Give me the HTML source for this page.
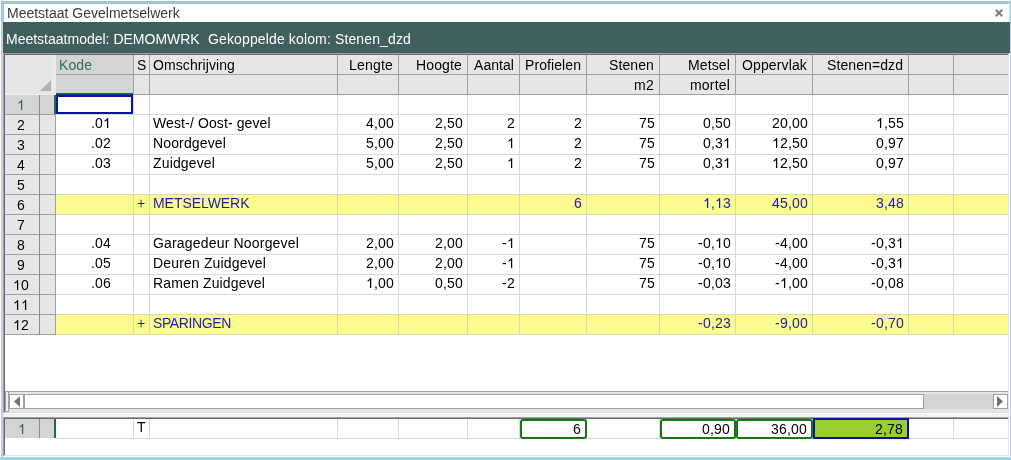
<!DOCTYPE html>
<html><head><meta charset="utf-8"><style>
html,body{margin:0;padding:0;}
body{width:1011px;height:460px;position:relative;overflow:hidden;background:#fff;font-family:"Liberation Sans",sans-serif;font-size:14px;}
div,svg{position:absolute;}
.t{position:absolute;will-change:transform;line-height:16px;height:16px;white-space:pre;font-family:"Liberation Sans",sans-serif;font-size:14px;}
.r{width:300px;text-align:right;}
.one{position:absolute;}
.c{width:100px;text-align:center;}
</style></head><body>
<div style="left:0px;top:0px;width:1011px;height:460px;background:#ffffff;"></div>
<div style="left:1px;top:0px;width:1px;height:460px;background:#c3cedd;"></div>
<div style="left:2px;top:0px;width:1px;height:460px;background:#c6d0de;"></div>
<div style="left:1010px;top:0px;width:1px;height:460px;background:#c0cde0;"></div>
<div style="left:1px;top:1px;width:1010px;height:1px;background:#a6bcc8;"></div>
<div style="left:1px;top:2px;width:1010px;height:1px;background:#9fd1da;"></div>
<div style="left:1px;top:3px;width:1010px;height:1px;background:#94c9cb;"></div>
<div style="left:1px;top:1px;width:1px;height:21px;background:#aec0d6;"></div>
<div style="left:2px;top:1px;width:1px;height:21px;background:#a0d0dc;"></div>
<div style="left:3px;top:1px;width:1px;height:21px;background:#92c8ca;"></div>
<div style="left:1009px;top:1px;width:1px;height:21px;background:#c4e6e8;"></div>
<div style="left:1010px;top:1px;width:1px;height:21px;background:#b4cce0;"></div>
<div style="left:0px;top:457px;width:1011px;height:1px;background:#a8d8ec;"></div>
<div style="left:0px;top:458px;width:1011px;height:1px;background:#9ad4ea;"></div>
<div style="left:0px;top:459px;width:1011px;height:1px;background:#9ad4ea;"></div>
<div style="left:4px;top:4px;width:1005px;height:18px;background:#ffffff;"></div>
<span class="t" style="left:7px;top:5px;color:#3a3a3a;letter-spacing:0.000px;">Meetstaat Gevelmetselwerk</span>
<svg style="position:absolute;left:995px;top:9px" width="8" height="8" viewBox="0 0 8 8"><path d="M1.5 1.5L6.5 6.5M6.5 1.5L1.5 6.5" stroke="#7c7c7c" stroke-width="2" stroke-linecap="square" fill="none"/></svg>
<div style="left:3px;top:22px;width:1007px;height:31px;background:#405f5d;"></div>
<span class="t" style="left:6px;top:31px;color:#ffffff;letter-spacing:0.000px;">Meetstaatmodel: DEMOMWRK</span>
<span class="t" style="left:208px;top:31px;color:#ffffff;letter-spacing:0.134px;">Gekoppelde kolom: Stenen_dzd</span>
<div style="left:3px;top:53px;width:1007px;height:361px;background:#ffffff;"></div>
<div style="left:3px;top:53px;width:1006px;height:1px;background:#a0a0a0;"></div>
<div style="left:3px;top:53px;width:1px;height:360px;background:#a0a0a0;"></div>
<div style="left:4px;top:54px;width:1005px;height:1px;background:#696969;"></div>
<div style="left:4px;top:54px;width:1px;height:359px;background:#696969;"></div>
<div style="left:4px;top:412px;width:1005px;height:1px;background:#e3e3e3;"></div>
<div style="left:1008px;top:54px;width:1px;height:359px;background:#e3e3e3;"></div>
<div style="left:4px;top:412px;width:1004px;height:1px;background:#e3e3e3;"></div>
<div style="left:3px;top:414px;width:1007px;height:3px;background:#f4f4f4;"></div>
<div style="left:5px;top:55px;width:1003px;height:39px;background:#e6e6e6;"></div>
<div style="left:52px;top:55px;width:4px;height:39px;background:#ececec;"></div>
<div style="left:56px;top:55px;width:77px;height:39px;background:#d4d4d4;"></div>
<div style="left:56px;top:74px;width:952px;height:1px;background:#a0a0a0;"></div>
<div style="left:5px;top:94px;width:51px;height:1px;background:#f0f0f0;"></div>
<div style="left:56px;top:94px;width:952px;height:1px;background:#a0a0a0;"></div>
<div style="left:56px;top:92px;width:77px;height:1px;background:#bfe0c8;"></div>
<div style="left:56px;top:93px;width:77px;height:1px;background:#1f6b3f;"></div>
<div style="left:56px;top:94px;width:77px;height:1px;background:#143a96;"></div>
<div style="left:133px;top:55px;width:1px;height:39px;background:#a0a0a0;"></div>
<div style="left:149px;top:55px;width:1px;height:39px;background:#a0a0a0;"></div>
<div style="left:337px;top:55px;width:1px;height:39px;background:#a0a0a0;"></div>
<div style="left:398px;top:55px;width:1px;height:39px;background:#a0a0a0;"></div>
<div style="left:467px;top:55px;width:1px;height:39px;background:#a0a0a0;"></div>
<div style="left:519px;top:55px;width:1px;height:39px;background:#a0a0a0;"></div>
<div style="left:586px;top:55px;width:1px;height:39px;background:#a0a0a0;"></div>
<div style="left:659px;top:55px;width:1px;height:39px;background:#a0a0a0;"></div>
<div style="left:735px;top:55px;width:1px;height:39px;background:#a0a0a0;"></div>
<div style="left:812px;top:55px;width:1px;height:39px;background:#a0a0a0;"></div>
<div style="left:908px;top:55px;width:1px;height:39px;background:#a0a0a0;"></div>
<div style="left:953px;top:55px;width:1px;height:39px;background:#a0a0a0;"></div>
<svg style="position:absolute;left:40px;top:80px" width="12" height="12"><path d="M0 11L11 11L11 0Z" fill="#b4b4b4"/></svg>
<span class="t" style="left:59px;top:57px;color:#2d6e4e;letter-spacing:0.076px;">Kode</span>
<span class="t" style="left:137px;top:57px;color:#000;letter-spacing:-0.338px;">S</span>
<span class="t" style="left:153px;top:57px;color:#000;letter-spacing:0.091px;">Omschrijving</span>
<span class="t" style="left:349.0px;top:57px;color:#000;letter-spacing:0.197px;">Lengte</span>
<span class="t" style="left:416.0px;top:57px;color:#000;letter-spacing:0.143px;">Hoogte</span>
<span class="t" style="left:474.0px;top:57px;color:#000;letter-spacing:0.051px;">Aantal</span>
<span class="t" style="left:525.0px;top:57px;color:#000;letter-spacing:0.083px;">Profielen</span>
<span class="t" style="left:609.0px;top:57px;color:#000;letter-spacing:0.105px;">Stenen</span>
<span class="t" style="left:688.0px;top:57px;color:#000;letter-spacing:0.128px;">Metsel</span>
<span class="t" style="left:742.0px;top:57px;color:#000;letter-spacing:0.133px;">Oppervlak</span>
<span class="t" style="left:827.0px;top:57px;color:#000;letter-spacing:0.088px;">Stenen=dzd</span>
<span class="t" style="left:634.0px;top:77px;color:#000;letter-spacing:0.276px;">m2</span>
<span class="t" style="left:690.0px;top:77px;color:#000;letter-spacing:0.184px;">mortel</span>
<div style="left:5px;top:95px;width:50px;height:19px;background:#d4d4d4;"></div>
<div style="left:5px;top:114px;width:51px;height:1px;background:#a0a0a0;"></div>
<div style="left:56px;top:114px;width:952px;height:1px;background:#d8d8d8;"></div>
<div style="left:133px;top:95px;width:1px;height:19px;background:#d8d8d8;"></div>
<div style="left:149px;top:95px;width:1px;height:19px;background:#d8d8d8;"></div>
<div style="left:337px;top:95px;width:1px;height:19px;background:#d8d8d8;"></div>
<div style="left:398px;top:95px;width:1px;height:19px;background:#d8d8d8;"></div>
<div style="left:467px;top:95px;width:1px;height:19px;background:#d8d8d8;"></div>
<div style="left:519px;top:95px;width:1px;height:19px;background:#d8d8d8;"></div>
<div style="left:586px;top:95px;width:1px;height:19px;background:#d8d8d8;"></div>
<div style="left:659px;top:95px;width:1px;height:19px;background:#d8d8d8;"></div>
<div style="left:735px;top:95px;width:1px;height:19px;background:#d8d8d8;"></div>
<div style="left:812px;top:95px;width:1px;height:19px;background:#d8d8d8;"></div>
<div style="left:908px;top:95px;width:1px;height:19px;background:#d8d8d8;"></div>
<div style="left:953px;top:95px;width:1px;height:19px;background:#d8d8d8;"></div>
<svg class="one" style="left:17.00px;top:97px" width="8" height="16"><path d="M5.22 13.00 L3.99 13.00 L3.99 5.16 L3.69 5.43 L3.21 5.77 L2.67 6.10 L2.05 6.42 L1.52 6.64 L1.52 5.44 L2.26 5.07 L2.94 4.59 L3.55 4.04 L4.03 3.50 L4.38 2.98 L5.22 2.98Z" fill="#2f6f47"/></svg>
<span class="t" style="left:17.0px;top:97px;color:#2f6f47;letter-spacing:0.214px;"> </span>
<div style="left:5px;top:115px;width:50px;height:19px;background:#e6e6e6;"></div>
<div style="left:5px;top:134px;width:51px;height:1px;background:#a0a0a0;"></div>
<div style="left:56px;top:134px;width:952px;height:1px;background:#d8d8d8;"></div>
<div style="left:133px;top:115px;width:1px;height:19px;background:#d8d8d8;"></div>
<div style="left:149px;top:115px;width:1px;height:19px;background:#d8d8d8;"></div>
<div style="left:337px;top:115px;width:1px;height:19px;background:#d8d8d8;"></div>
<div style="left:398px;top:115px;width:1px;height:19px;background:#d8d8d8;"></div>
<div style="left:467px;top:115px;width:1px;height:19px;background:#d8d8d8;"></div>
<div style="left:519px;top:115px;width:1px;height:19px;background:#d8d8d8;"></div>
<div style="left:586px;top:115px;width:1px;height:19px;background:#d8d8d8;"></div>
<div style="left:659px;top:115px;width:1px;height:19px;background:#d8d8d8;"></div>
<div style="left:735px;top:115px;width:1px;height:19px;background:#d8d8d8;"></div>
<div style="left:812px;top:115px;width:1px;height:19px;background:#d8d8d8;"></div>
<div style="left:908px;top:115px;width:1px;height:19px;background:#d8d8d8;"></div>
<div style="left:953px;top:115px;width:1px;height:19px;background:#d8d8d8;"></div>
<span class="t" style="left:17.0px;top:117px;color:#000;letter-spacing:0.214px;">2</span>
<svg class="one" style="left:103.03px;top:115px" width="8" height="16"><path d="M5.22 13.00 L3.99 13.00 L3.99 5.16 L3.69 5.43 L3.21 5.77 L2.67 6.10 L2.05 6.42 L1.52 6.64 L1.52 5.44 L2.26 5.07 L2.94 4.59 L3.55 4.04 L4.03 3.50 L4.38 2.98 L5.22 2.98Z" fill="#000"/></svg>
<span class="t" style="left:91px;top:115px;color:#000;letter-spacing:0.179px;">.0 </span>
<span class="t" style="left:153px;top:115px;color:#000;letter-spacing:0.116px;">West-/ Oost- gevel</span>
<span class="t" style="left:366.0px;top:115px;color:#000;letter-spacing:0.188px;">4,00</span>
<span class="t" style="left:435.0px;top:115px;color:#000;letter-spacing:0.188px;">2,50</span>
<span class="t" style="left:507.0px;top:115px;color:#000;letter-spacing:0.214px;">2</span>
<span class="t" style="left:574.0px;top:115px;color:#000;letter-spacing:0.214px;">2</span>
<span class="t" style="left:639.0px;top:115px;color:#000;letter-spacing:0.214px;">75</span>
<span class="t" style="left:703.0px;top:115px;color:#000;letter-spacing:0.188px;">0,50</span>
<span class="t" style="left:772.0px;top:115px;color:#000;letter-spacing:0.193px;">20,00</span>
<svg class="one" style="left:876.00px;top:115px" width="8" height="16"><path d="M5.22 13.00 L3.99 13.00 L3.99 5.16 L3.69 5.43 L3.21 5.77 L2.67 6.10 L2.05 6.42 L1.52 6.64 L1.52 5.44 L2.26 5.07 L2.94 4.59 L3.55 4.04 L4.03 3.50 L4.38 2.98 L5.22 2.98Z" fill="#000"/></svg>
<span class="t" style="left:876.0px;top:115px;color:#000;letter-spacing:0.188px;"> ,55</span>
<div style="left:5px;top:135px;width:50px;height:19px;background:#e6e6e6;"></div>
<div style="left:5px;top:154px;width:51px;height:1px;background:#a0a0a0;"></div>
<div style="left:56px;top:154px;width:952px;height:1px;background:#d8d8d8;"></div>
<div style="left:133px;top:135px;width:1px;height:19px;background:#d8d8d8;"></div>
<div style="left:149px;top:135px;width:1px;height:19px;background:#d8d8d8;"></div>
<div style="left:337px;top:135px;width:1px;height:19px;background:#d8d8d8;"></div>
<div style="left:398px;top:135px;width:1px;height:19px;background:#d8d8d8;"></div>
<div style="left:467px;top:135px;width:1px;height:19px;background:#d8d8d8;"></div>
<div style="left:519px;top:135px;width:1px;height:19px;background:#d8d8d8;"></div>
<div style="left:586px;top:135px;width:1px;height:19px;background:#d8d8d8;"></div>
<div style="left:659px;top:135px;width:1px;height:19px;background:#d8d8d8;"></div>
<div style="left:735px;top:135px;width:1px;height:19px;background:#d8d8d8;"></div>
<div style="left:812px;top:135px;width:1px;height:19px;background:#d8d8d8;"></div>
<div style="left:908px;top:135px;width:1px;height:19px;background:#d8d8d8;"></div>
<div style="left:953px;top:135px;width:1px;height:19px;background:#d8d8d8;"></div>
<span class="t" style="left:17.0px;top:137px;color:#000;letter-spacing:0.214px;">3</span>
<span class="t" style="left:91px;top:135px;color:#000;letter-spacing:0.179px;">.02</span>
<span class="t" style="left:153px;top:135px;color:#000;letter-spacing:0.140px;">Noordgevel</span>
<span class="t" style="left:366.0px;top:135px;color:#000;letter-spacing:0.188px;">5,00</span>
<span class="t" style="left:435.0px;top:135px;color:#000;letter-spacing:0.188px;">2,50</span>
<svg class="one" style="left:507.00px;top:135px" width="8" height="16"><path d="M5.22 13.00 L3.99 13.00 L3.99 5.16 L3.69 5.43 L3.21 5.77 L2.67 6.10 L2.05 6.42 L1.52 6.64 L1.52 5.44 L2.26 5.07 L2.94 4.59 L3.55 4.04 L4.03 3.50 L4.38 2.98 L5.22 2.98Z" fill="#000"/></svg>
<span class="t" style="left:507.0px;top:135px;color:#000;letter-spacing:0.214px;"> </span>
<span class="t" style="left:574.0px;top:135px;color:#000;letter-spacing:0.214px;">2</span>
<span class="t" style="left:639.0px;top:135px;color:#000;letter-spacing:0.214px;">75</span>
<svg class="one" style="left:723.03px;top:135px" width="8" height="16"><path d="M5.22 13.00 L3.99 13.00 L3.99 5.16 L3.69 5.43 L3.21 5.77 L2.67 6.10 L2.05 6.42 L1.52 6.64 L1.52 5.44 L2.26 5.07 L2.94 4.59 L3.55 4.04 L4.03 3.50 L4.38 2.98 L5.22 2.98Z" fill="#000"/></svg>
<span class="t" style="left:703.0px;top:135px;color:#000;letter-spacing:0.188px;">0,3 </span>
<svg class="one" style="left:772.00px;top:135px" width="8" height="16"><path d="M5.22 13.00 L3.99 13.00 L3.99 5.16 L3.69 5.43 L3.21 5.77 L2.67 6.10 L2.05 6.42 L1.52 6.64 L1.52 5.44 L2.26 5.07 L2.94 4.59 L3.55 4.04 L4.03 3.50 L4.38 2.98 L5.22 2.98Z" fill="#000"/></svg>
<span class="t" style="left:772.0px;top:135px;color:#000;letter-spacing:0.193px;"> 2,50</span>
<span class="t" style="left:876.0px;top:135px;color:#000;letter-spacing:0.188px;">0,97</span>
<div style="left:5px;top:155px;width:50px;height:19px;background:#e6e6e6;"></div>
<div style="left:5px;top:174px;width:51px;height:1px;background:#a0a0a0;"></div>
<div style="left:56px;top:174px;width:952px;height:1px;background:#d8d8d8;"></div>
<div style="left:133px;top:155px;width:1px;height:19px;background:#d8d8d8;"></div>
<div style="left:149px;top:155px;width:1px;height:19px;background:#d8d8d8;"></div>
<div style="left:337px;top:155px;width:1px;height:19px;background:#d8d8d8;"></div>
<div style="left:398px;top:155px;width:1px;height:19px;background:#d8d8d8;"></div>
<div style="left:467px;top:155px;width:1px;height:19px;background:#d8d8d8;"></div>
<div style="left:519px;top:155px;width:1px;height:19px;background:#d8d8d8;"></div>
<div style="left:586px;top:155px;width:1px;height:19px;background:#d8d8d8;"></div>
<div style="left:659px;top:155px;width:1px;height:19px;background:#d8d8d8;"></div>
<div style="left:735px;top:155px;width:1px;height:19px;background:#d8d8d8;"></div>
<div style="left:812px;top:155px;width:1px;height:19px;background:#d8d8d8;"></div>
<div style="left:908px;top:155px;width:1px;height:19px;background:#d8d8d8;"></div>
<div style="left:953px;top:155px;width:1px;height:19px;background:#d8d8d8;"></div>
<span class="t" style="left:17.0px;top:157px;color:#000;letter-spacing:0.214px;">4</span>
<span class="t" style="left:91px;top:155px;color:#000;letter-spacing:0.179px;">.03</span>
<span class="t" style="left:153px;top:155px;color:#000;letter-spacing:0.144px;">Zuidgevel</span>
<span class="t" style="left:366.0px;top:155px;color:#000;letter-spacing:0.188px;">5,00</span>
<span class="t" style="left:435.0px;top:155px;color:#000;letter-spacing:0.188px;">2,50</span>
<svg class="one" style="left:507.00px;top:155px" width="8" height="16"><path d="M5.22 13.00 L3.99 13.00 L3.99 5.16 L3.69 5.43 L3.21 5.77 L2.67 6.10 L2.05 6.42 L1.52 6.64 L1.52 5.44 L2.26 5.07 L2.94 4.59 L3.55 4.04 L4.03 3.50 L4.38 2.98 L5.22 2.98Z" fill="#000"/></svg>
<span class="t" style="left:507.0px;top:155px;color:#000;letter-spacing:0.214px;"> </span>
<span class="t" style="left:574.0px;top:155px;color:#000;letter-spacing:0.214px;">2</span>
<span class="t" style="left:639.0px;top:155px;color:#000;letter-spacing:0.214px;">75</span>
<svg class="one" style="left:723.03px;top:155px" width="8" height="16"><path d="M5.22 13.00 L3.99 13.00 L3.99 5.16 L3.69 5.43 L3.21 5.77 L2.67 6.10 L2.05 6.42 L1.52 6.64 L1.52 5.44 L2.26 5.07 L2.94 4.59 L3.55 4.04 L4.03 3.50 L4.38 2.98 L5.22 2.98Z" fill="#000"/></svg>
<span class="t" style="left:703.0px;top:155px;color:#000;letter-spacing:0.188px;">0,3 </span>
<svg class="one" style="left:772.00px;top:155px" width="8" height="16"><path d="M5.22 13.00 L3.99 13.00 L3.99 5.16 L3.69 5.43 L3.21 5.77 L2.67 6.10 L2.05 6.42 L1.52 6.64 L1.52 5.44 L2.26 5.07 L2.94 4.59 L3.55 4.04 L4.03 3.50 L4.38 2.98 L5.22 2.98Z" fill="#000"/></svg>
<span class="t" style="left:772.0px;top:155px;color:#000;letter-spacing:0.193px;"> 2,50</span>
<span class="t" style="left:876.0px;top:155px;color:#000;letter-spacing:0.188px;">0,97</span>
<div style="left:5px;top:175px;width:50px;height:19px;background:#e6e6e6;"></div>
<div style="left:5px;top:194px;width:51px;height:1px;background:#a0a0a0;"></div>
<div style="left:56px;top:194px;width:952px;height:1px;background:#d8d8d8;"></div>
<div style="left:133px;top:175px;width:1px;height:19px;background:#d8d8d8;"></div>
<div style="left:149px;top:175px;width:1px;height:19px;background:#d8d8d8;"></div>
<div style="left:337px;top:175px;width:1px;height:19px;background:#d8d8d8;"></div>
<div style="left:398px;top:175px;width:1px;height:19px;background:#d8d8d8;"></div>
<div style="left:467px;top:175px;width:1px;height:19px;background:#d8d8d8;"></div>
<div style="left:519px;top:175px;width:1px;height:19px;background:#d8d8d8;"></div>
<div style="left:586px;top:175px;width:1px;height:19px;background:#d8d8d8;"></div>
<div style="left:659px;top:175px;width:1px;height:19px;background:#d8d8d8;"></div>
<div style="left:735px;top:175px;width:1px;height:19px;background:#d8d8d8;"></div>
<div style="left:812px;top:175px;width:1px;height:19px;background:#d8d8d8;"></div>
<div style="left:908px;top:175px;width:1px;height:19px;background:#d8d8d8;"></div>
<div style="left:953px;top:175px;width:1px;height:19px;background:#d8d8d8;"></div>
<span class="t" style="left:17.0px;top:177px;color:#000;letter-spacing:0.214px;">5</span>
<div style="left:5px;top:195px;width:50px;height:19px;background:#e6e6e6;"></div>
<div style="left:5px;top:214px;width:51px;height:1px;background:#a0a0a0;"></div>
<div style="left:56px;top:195px;width:952px;height:19px;background:#fcfb90;"></div>
<div style="left:56px;top:194px;width:952px;height:1px;background:#dcd9b0;"></div>
<div style="left:56px;top:214px;width:952px;height:1px;background:#dcd9b0;"></div>
<div style="left:133px;top:195px;width:1px;height:19px;background:#dcd9b0;"></div>
<div style="left:149px;top:195px;width:1px;height:19px;background:#dcd9b0;"></div>
<div style="left:337px;top:195px;width:1px;height:19px;background:#dcd9b0;"></div>
<div style="left:398px;top:195px;width:1px;height:19px;background:#dcd9b0;"></div>
<div style="left:467px;top:195px;width:1px;height:19px;background:#dcd9b0;"></div>
<div style="left:519px;top:195px;width:1px;height:19px;background:#dcd9b0;"></div>
<div style="left:586px;top:195px;width:1px;height:19px;background:#dcd9b0;"></div>
<div style="left:659px;top:195px;width:1px;height:19px;background:#dcd9b0;"></div>
<div style="left:735px;top:195px;width:1px;height:19px;background:#dcd9b0;"></div>
<div style="left:812px;top:195px;width:1px;height:19px;background:#dcd9b0;"></div>
<div style="left:908px;top:195px;width:1px;height:19px;background:#dcd9b0;"></div>
<div style="left:953px;top:195px;width:1px;height:19px;background:#dcd9b0;"></div>
<span class="t" style="left:17.0px;top:197px;color:#000;letter-spacing:0.214px;">6</span>
<span class="t" style="left:137px;top:195px;color:#1c1cac;letter-spacing:-0.176px;">+</span>
<span class="t" style="left:153px;top:195px;color:#1c1cac;letter-spacing:-0.051px;">METSELWERK</span>
<span class="t" style="left:574.0px;top:195px;color:#1c1cac;letter-spacing:0.214px;">6</span>
<svg class="one" style="left:703.00px;top:195px" width="8" height="16"><path d="M5.22 13.00 L3.99 13.00 L3.99 5.16 L3.69 5.43 L3.21 5.77 L2.67 6.10 L2.05 6.42 L1.52 6.64 L1.52 5.44 L2.26 5.07 L2.94 4.59 L3.55 4.04 L4.03 3.50 L4.38 2.98 L5.22 2.98Z" fill="#1c1cac"/></svg>
<svg class="one" style="left:715.05px;top:195px" width="8" height="16"><path d="M5.22 13.00 L3.99 13.00 L3.99 5.16 L3.69 5.43 L3.21 5.77 L2.67 6.10 L2.05 6.42 L1.52 6.64 L1.52 5.44 L2.26 5.07 L2.94 4.59 L3.55 4.04 L4.03 3.50 L4.38 2.98 L5.22 2.98Z" fill="#1c1cac"/></svg>
<span class="t" style="left:703.0px;top:195px;color:#1c1cac;letter-spacing:0.188px;"> , 3</span>
<span class="t" style="left:772.0px;top:195px;color:#1c1cac;letter-spacing:0.193px;">45,00</span>
<span class="t" style="left:876.0px;top:195px;color:#1c1cac;letter-spacing:0.188px;">3,48</span>
<div style="left:5px;top:215px;width:50px;height:19px;background:#e6e6e6;"></div>
<div style="left:5px;top:234px;width:51px;height:1px;background:#a0a0a0;"></div>
<div style="left:56px;top:234px;width:952px;height:1px;background:#d8d8d8;"></div>
<div style="left:133px;top:215px;width:1px;height:19px;background:#d8d8d8;"></div>
<div style="left:149px;top:215px;width:1px;height:19px;background:#d8d8d8;"></div>
<div style="left:337px;top:215px;width:1px;height:19px;background:#d8d8d8;"></div>
<div style="left:398px;top:215px;width:1px;height:19px;background:#d8d8d8;"></div>
<div style="left:467px;top:215px;width:1px;height:19px;background:#d8d8d8;"></div>
<div style="left:519px;top:215px;width:1px;height:19px;background:#d8d8d8;"></div>
<div style="left:586px;top:215px;width:1px;height:19px;background:#d8d8d8;"></div>
<div style="left:659px;top:215px;width:1px;height:19px;background:#d8d8d8;"></div>
<div style="left:735px;top:215px;width:1px;height:19px;background:#d8d8d8;"></div>
<div style="left:812px;top:215px;width:1px;height:19px;background:#d8d8d8;"></div>
<div style="left:908px;top:215px;width:1px;height:19px;background:#d8d8d8;"></div>
<div style="left:953px;top:215px;width:1px;height:19px;background:#d8d8d8;"></div>
<span class="t" style="left:17.0px;top:217px;color:#000;letter-spacing:0.214px;">7</span>
<div style="left:5px;top:235px;width:50px;height:19px;background:#e6e6e6;"></div>
<div style="left:5px;top:254px;width:51px;height:1px;background:#a0a0a0;"></div>
<div style="left:56px;top:254px;width:952px;height:1px;background:#d8d8d8;"></div>
<div style="left:133px;top:235px;width:1px;height:19px;background:#d8d8d8;"></div>
<div style="left:149px;top:235px;width:1px;height:19px;background:#d8d8d8;"></div>
<div style="left:337px;top:235px;width:1px;height:19px;background:#d8d8d8;"></div>
<div style="left:398px;top:235px;width:1px;height:19px;background:#d8d8d8;"></div>
<div style="left:467px;top:235px;width:1px;height:19px;background:#d8d8d8;"></div>
<div style="left:519px;top:235px;width:1px;height:19px;background:#d8d8d8;"></div>
<div style="left:586px;top:235px;width:1px;height:19px;background:#d8d8d8;"></div>
<div style="left:659px;top:235px;width:1px;height:19px;background:#d8d8d8;"></div>
<div style="left:735px;top:235px;width:1px;height:19px;background:#d8d8d8;"></div>
<div style="left:812px;top:235px;width:1px;height:19px;background:#d8d8d8;"></div>
<div style="left:908px;top:235px;width:1px;height:19px;background:#d8d8d8;"></div>
<div style="left:953px;top:235px;width:1px;height:19px;background:#d8d8d8;"></div>
<span class="t" style="left:17.0px;top:237px;color:#000;letter-spacing:0.214px;">8</span>
<span class="t" style="left:91px;top:235px;color:#000;letter-spacing:0.179px;">.04</span>
<span class="t" style="left:153px;top:235px;color:#000;letter-spacing:0.179px;">Garagedeur Noorgevel</span>
<span class="t" style="left:366.0px;top:235px;color:#000;letter-spacing:0.188px;">2,00</span>
<span class="t" style="left:435.0px;top:235px;color:#000;letter-spacing:0.188px;">2,00</span>
<svg class="one" style="left:506.94px;top:235px" width="8" height="16"><path d="M5.22 13.00 L3.99 13.00 L3.99 5.16 L3.69 5.43 L3.21 5.77 L2.67 6.10 L2.05 6.42 L1.52 6.64 L1.52 5.44 L2.26 5.07 L2.94 4.59 L3.55 4.04 L4.03 3.50 L4.38 2.98 L5.22 2.98Z" fill="#000"/></svg>
<span class="t" style="left:502.0px;top:235px;color:#000;letter-spacing:0.276px;">- </span>
<span class="t" style="left:639.0px;top:235px;color:#000;letter-spacing:0.214px;">75</span>
<svg class="one" style="left:714.99px;top:235px" width="8" height="16"><path d="M5.22 13.00 L3.99 13.00 L3.99 5.16 L3.69 5.43 L3.21 5.77 L2.67 6.10 L2.05 6.42 L1.52 6.64 L1.52 5.44 L2.26 5.07 L2.94 4.59 L3.55 4.04 L4.03 3.50 L4.38 2.98 L5.22 2.98Z" fill="#000"/></svg>
<span class="t" style="left:698.0px;top:235px;color:#000;letter-spacing:0.218px;">-0, 0</span>
<span class="t" style="left:775.0px;top:235px;color:#000;letter-spacing:0.218px;">-4,00</span>
<svg class="one" style="left:896.00px;top:235px" width="8" height="16"><path d="M5.22 13.00 L3.99 13.00 L3.99 5.16 L3.69 5.43 L3.21 5.77 L2.67 6.10 L2.05 6.42 L1.52 6.64 L1.52 5.44 L2.26 5.07 L2.94 4.59 L3.55 4.04 L4.03 3.50 L4.38 2.98 L5.22 2.98Z" fill="#000"/></svg>
<span class="t" style="left:871.0px;top:235px;color:#000;letter-spacing:0.218px;">-0,3 </span>
<div style="left:5px;top:255px;width:50px;height:19px;background:#e6e6e6;"></div>
<div style="left:5px;top:274px;width:51px;height:1px;background:#a0a0a0;"></div>
<div style="left:56px;top:274px;width:952px;height:1px;background:#d8d8d8;"></div>
<div style="left:133px;top:255px;width:1px;height:19px;background:#d8d8d8;"></div>
<div style="left:149px;top:255px;width:1px;height:19px;background:#d8d8d8;"></div>
<div style="left:337px;top:255px;width:1px;height:19px;background:#d8d8d8;"></div>
<div style="left:398px;top:255px;width:1px;height:19px;background:#d8d8d8;"></div>
<div style="left:467px;top:255px;width:1px;height:19px;background:#d8d8d8;"></div>
<div style="left:519px;top:255px;width:1px;height:19px;background:#d8d8d8;"></div>
<div style="left:586px;top:255px;width:1px;height:19px;background:#d8d8d8;"></div>
<div style="left:659px;top:255px;width:1px;height:19px;background:#d8d8d8;"></div>
<div style="left:735px;top:255px;width:1px;height:19px;background:#d8d8d8;"></div>
<div style="left:812px;top:255px;width:1px;height:19px;background:#d8d8d8;"></div>
<div style="left:908px;top:255px;width:1px;height:19px;background:#d8d8d8;"></div>
<div style="left:953px;top:255px;width:1px;height:19px;background:#d8d8d8;"></div>
<span class="t" style="left:17.0px;top:257px;color:#000;letter-spacing:0.214px;">9</span>
<span class="t" style="left:91px;top:255px;color:#000;letter-spacing:0.179px;">.05</span>
<span class="t" style="left:153px;top:255px;color:#000;letter-spacing:0.156px;">Deuren Zuidgevel</span>
<span class="t" style="left:366.0px;top:255px;color:#000;letter-spacing:0.188px;">2,00</span>
<span class="t" style="left:435.0px;top:255px;color:#000;letter-spacing:0.188px;">2,00</span>
<svg class="one" style="left:506.94px;top:255px" width="8" height="16"><path d="M5.22 13.00 L3.99 13.00 L3.99 5.16 L3.69 5.43 L3.21 5.77 L2.67 6.10 L2.05 6.42 L1.52 6.64 L1.52 5.44 L2.26 5.07 L2.94 4.59 L3.55 4.04 L4.03 3.50 L4.38 2.98 L5.22 2.98Z" fill="#000"/></svg>
<span class="t" style="left:502.0px;top:255px;color:#000;letter-spacing:0.276px;">- </span>
<span class="t" style="left:639.0px;top:255px;color:#000;letter-spacing:0.214px;">75</span>
<svg class="one" style="left:714.99px;top:255px" width="8" height="16"><path d="M5.22 13.00 L3.99 13.00 L3.99 5.16 L3.69 5.43 L3.21 5.77 L2.67 6.10 L2.05 6.42 L1.52 6.64 L1.52 5.44 L2.26 5.07 L2.94 4.59 L3.55 4.04 L4.03 3.50 L4.38 2.98 L5.22 2.98Z" fill="#000"/></svg>
<span class="t" style="left:698.0px;top:255px;color:#000;letter-spacing:0.218px;">-0, 0</span>
<span class="t" style="left:775.0px;top:255px;color:#000;letter-spacing:0.218px;">-4,00</span>
<svg class="one" style="left:896.00px;top:255px" width="8" height="16"><path d="M5.22 13.00 L3.99 13.00 L3.99 5.16 L3.69 5.43 L3.21 5.77 L2.67 6.10 L2.05 6.42 L1.52 6.64 L1.52 5.44 L2.26 5.07 L2.94 4.59 L3.55 4.04 L4.03 3.50 L4.38 2.98 L5.22 2.98Z" fill="#000"/></svg>
<span class="t" style="left:871.0px;top:255px;color:#000;letter-spacing:0.218px;">-0,3 </span>
<div style="left:5px;top:275px;width:50px;height:19px;background:#e6e6e6;"></div>
<div style="left:5px;top:294px;width:51px;height:1px;background:#a0a0a0;"></div>
<div style="left:56px;top:294px;width:952px;height:1px;background:#d8d8d8;"></div>
<div style="left:133px;top:275px;width:1px;height:19px;background:#d8d8d8;"></div>
<div style="left:149px;top:275px;width:1px;height:19px;background:#d8d8d8;"></div>
<div style="left:337px;top:275px;width:1px;height:19px;background:#d8d8d8;"></div>
<div style="left:398px;top:275px;width:1px;height:19px;background:#d8d8d8;"></div>
<div style="left:467px;top:275px;width:1px;height:19px;background:#d8d8d8;"></div>
<div style="left:519px;top:275px;width:1px;height:19px;background:#d8d8d8;"></div>
<div style="left:586px;top:275px;width:1px;height:19px;background:#d8d8d8;"></div>
<div style="left:659px;top:275px;width:1px;height:19px;background:#d8d8d8;"></div>
<div style="left:735px;top:275px;width:1px;height:19px;background:#d8d8d8;"></div>
<div style="left:812px;top:275px;width:1px;height:19px;background:#d8d8d8;"></div>
<div style="left:908px;top:275px;width:1px;height:19px;background:#d8d8d8;"></div>
<div style="left:953px;top:275px;width:1px;height:19px;background:#d8d8d8;"></div>
<svg class="one" style="left:13.00px;top:277px" width="8" height="16"><path d="M5.22 13.00 L3.99 13.00 L3.99 5.16 L3.69 5.43 L3.21 5.77 L2.67 6.10 L2.05 6.42 L1.52 6.64 L1.52 5.44 L2.26 5.07 L2.94 4.59 L3.55 4.04 L4.03 3.50 L4.38 2.98 L5.22 2.98Z" fill="#000"/></svg>
<span class="t" style="left:13.0px;top:277px;color:#000;letter-spacing:0.214px;"> 0</span>
<span class="t" style="left:91px;top:275px;color:#000;letter-spacing:0.179px;">.06</span>
<span class="t" style="left:153px;top:275px;color:#000;letter-spacing:0.152px;">Ramen Zuidgevel</span>
<svg class="one" style="left:366.00px;top:275px" width="8" height="16"><path d="M5.22 13.00 L3.99 13.00 L3.99 5.16 L3.69 5.43 L3.21 5.77 L2.67 6.10 L2.05 6.42 L1.52 6.64 L1.52 5.44 L2.26 5.07 L2.94 4.59 L3.55 4.04 L4.03 3.50 L4.38 2.98 L5.22 2.98Z" fill="#000"/></svg>
<span class="t" style="left:366.0px;top:275px;color:#000;letter-spacing:0.188px;"> ,00</span>
<span class="t" style="left:435.0px;top:275px;color:#000;letter-spacing:0.188px;">0,50</span>
<span class="t" style="left:502.0px;top:275px;color:#000;letter-spacing:0.276px;">-2</span>
<span class="t" style="left:639.0px;top:275px;color:#000;letter-spacing:0.214px;">75</span>
<span class="t" style="left:698.0px;top:275px;color:#000;letter-spacing:0.218px;">-0,03</span>
<svg class="one" style="left:779.88px;top:275px" width="8" height="16"><path d="M5.22 13.00 L3.99 13.00 L3.99 5.16 L3.69 5.43 L3.21 5.77 L2.67 6.10 L2.05 6.42 L1.52 6.64 L1.52 5.44 L2.26 5.07 L2.94 4.59 L3.55 4.04 L4.03 3.50 L4.38 2.98 L5.22 2.98Z" fill="#000"/></svg>
<span class="t" style="left:775.0px;top:275px;color:#000;letter-spacing:0.218px;">- ,00</span>
<span class="t" style="left:871.0px;top:275px;color:#000;letter-spacing:0.218px;">-0,08</span>
<div style="left:5px;top:295px;width:50px;height:19px;background:#e6e6e6;"></div>
<div style="left:5px;top:314px;width:51px;height:1px;background:#a0a0a0;"></div>
<div style="left:56px;top:314px;width:952px;height:1px;background:#d8d8d8;"></div>
<div style="left:133px;top:295px;width:1px;height:19px;background:#d8d8d8;"></div>
<div style="left:149px;top:295px;width:1px;height:19px;background:#d8d8d8;"></div>
<div style="left:337px;top:295px;width:1px;height:19px;background:#d8d8d8;"></div>
<div style="left:398px;top:295px;width:1px;height:19px;background:#d8d8d8;"></div>
<div style="left:467px;top:295px;width:1px;height:19px;background:#d8d8d8;"></div>
<div style="left:519px;top:295px;width:1px;height:19px;background:#d8d8d8;"></div>
<div style="left:586px;top:295px;width:1px;height:19px;background:#d8d8d8;"></div>
<div style="left:659px;top:295px;width:1px;height:19px;background:#d8d8d8;"></div>
<div style="left:735px;top:295px;width:1px;height:19px;background:#d8d8d8;"></div>
<div style="left:812px;top:295px;width:1px;height:19px;background:#d8d8d8;"></div>
<div style="left:908px;top:295px;width:1px;height:19px;background:#d8d8d8;"></div>
<div style="left:953px;top:295px;width:1px;height:19px;background:#d8d8d8;"></div>
<svg class="one" style="left:13.00px;top:297px" width="8" height="16"><path d="M5.22 13.00 L3.99 13.00 L3.99 5.16 L3.69 5.43 L3.21 5.77 L2.67 6.10 L2.05 6.42 L1.52 6.64 L1.52 5.44 L2.26 5.07 L2.94 4.59 L3.55 4.04 L4.03 3.50 L4.38 2.98 L5.22 2.98Z" fill="#000"/></svg>
<svg class="one" style="left:21.00px;top:297px" width="8" height="16"><path d="M5.22 13.00 L3.99 13.00 L3.99 5.16 L3.69 5.43 L3.21 5.77 L2.67 6.10 L2.05 6.42 L1.52 6.64 L1.52 5.44 L2.26 5.07 L2.94 4.59 L3.55 4.04 L4.03 3.50 L4.38 2.98 L5.22 2.98Z" fill="#000"/></svg>
<span class="t" style="left:13.0px;top:297px;color:#000;letter-spacing:0.214px;">  </span>
<div style="left:5px;top:315px;width:50px;height:19px;background:#e6e6e6;"></div>
<div style="left:5px;top:334px;width:51px;height:1px;background:#a0a0a0;"></div>
<div style="left:56px;top:315px;width:952px;height:19px;background:#fcfb90;"></div>
<div style="left:56px;top:314px;width:952px;height:1px;background:#dcd9b0;"></div>
<div style="left:56px;top:334px;width:952px;height:1px;background:#dcd9b0;"></div>
<div style="left:133px;top:315px;width:1px;height:19px;background:#dcd9b0;"></div>
<div style="left:149px;top:315px;width:1px;height:19px;background:#dcd9b0;"></div>
<div style="left:337px;top:315px;width:1px;height:19px;background:#dcd9b0;"></div>
<div style="left:398px;top:315px;width:1px;height:19px;background:#dcd9b0;"></div>
<div style="left:467px;top:315px;width:1px;height:19px;background:#dcd9b0;"></div>
<div style="left:519px;top:315px;width:1px;height:19px;background:#dcd9b0;"></div>
<div style="left:586px;top:315px;width:1px;height:19px;background:#dcd9b0;"></div>
<div style="left:659px;top:315px;width:1px;height:19px;background:#dcd9b0;"></div>
<div style="left:735px;top:315px;width:1px;height:19px;background:#dcd9b0;"></div>
<div style="left:812px;top:315px;width:1px;height:19px;background:#dcd9b0;"></div>
<div style="left:908px;top:315px;width:1px;height:19px;background:#dcd9b0;"></div>
<div style="left:953px;top:315px;width:1px;height:19px;background:#dcd9b0;"></div>
<svg class="one" style="left:13.00px;top:317px" width="8" height="16"><path d="M5.22 13.00 L3.99 13.00 L3.99 5.16 L3.69 5.43 L3.21 5.77 L2.67 6.10 L2.05 6.42 L1.52 6.64 L1.52 5.44 L2.26 5.07 L2.94 4.59 L3.55 4.04 L4.03 3.50 L4.38 2.98 L5.22 2.98Z" fill="#000"/></svg>
<span class="t" style="left:13.0px;top:317px;color:#000;letter-spacing:0.214px;"> 2</span>
<span class="t" style="left:137px;top:315px;color:#1c1cac;letter-spacing:-0.176px;">+</span>
<span class="t" style="left:153px;top:315px;color:#1c1cac;letter-spacing:-0.385px;">SPARINGEN</span>
<span class="t" style="left:698.0px;top:315px;color:#1c1cac;letter-spacing:0.218px;">-0,23</span>
<span class="t" style="left:775.0px;top:315px;color:#1c1cac;letter-spacing:0.218px;">-9,00</span>
<span class="t" style="left:871.0px;top:315px;color:#1c1cac;letter-spacing:0.218px;">-0,70</span>
<div style="left:39px;top:95px;width:1px;height:239px;background:#8c8c8c;"></div>
<div style="left:55px;top:95px;width:1px;height:239px;background:#a0a0a0;"></div>
<div style="left:54px;top:95px;width:2px;height:19px;background:#1f6b3f;"></div>
<div style="left:56px;top:95px;width:77px;height:19px;background:transparent;box-sizing:border-box;border:2px solid #0a12a6;"></div>
<div style="left:5px;top:391px;width:1003px;height:1px;background:#a0a0a0;"></div>
<div style="left:5px;top:392px;width:1003px;height:20px;background:#e6e6e6;"></div>
<div style="left:5px;top:391px;width:4px;height:21px;background:#f0f0f0;box-sizing:border-box;border:1px solid #a0a0a0;"></div>
<div style="left:9px;top:394px;width:15px;height:15px;background:#ffffff;box-sizing:border-box;border:1px solid #a0a0a0;"></div>
<svg style="position:absolute;left:9px;top:394px" width="15" height="15"><path d="M5 7.5L11 2L11 13Z" fill="#727272"/></svg>
<div style="left:24px;top:394px;width:900px;height:15px;background:#ffffff;box-sizing:border-box;border:1px solid #a0a0a0;"></div>
<div style="left:924px;top:394px;width:69px;height:15px;background:#d4d4d4;"></div>
<div style="left:993px;top:394px;width:15px;height:15px;background:#ffffff;box-sizing:border-box;border:1px solid #a0a0a0;"></div>
<svg style="position:absolute;left:993px;top:394px" width="15" height="15"><path d="M10 7.5L4 2L4 13Z" fill="#727272"/></svg>
<div style="left:3px;top:417px;width:1007px;height:40px;background:#ffffff;"></div>
<div style="left:3px;top:417px;width:1006px;height:1px;background:#a0a0a0;"></div>
<div style="left:3px;top:417px;width:1px;height:39px;background:#a0a0a0;"></div>
<div style="left:4px;top:418px;width:1005px;height:1px;background:#696969;"></div>
<div style="left:4px;top:418px;width:1px;height:38px;background:#696969;"></div>
<div style="left:4px;top:455px;width:1005px;height:1px;background:#e3e3e3;"></div>
<div style="left:1008px;top:418px;width:1px;height:38px;background:#e3e3e3;"></div>
<div style="left:4px;top:455px;width:1004px;height:1px;background:#e3e3e3;"></div>
<div style="left:5px;top:419px;width:50px;height:19px;background:#d4d4d4;"></div>
<div style="left:39px;top:419px;width:1px;height:19px;background:#8c8c8c;"></div>
<div style="left:54px;top:419px;width:2px;height:19px;background:#1f6b3f;"></div>
<div style="left:56px;top:438px;width:952px;height:1px;background:#d8d8d8;"></div>
<div style="left:133px;top:419px;width:1px;height:19px;background:#d8d8d8;"></div>
<div style="left:149px;top:419px;width:1px;height:19px;background:#d8d8d8;"></div>
<div style="left:337px;top:419px;width:1px;height:19px;background:#d8d8d8;"></div>
<div style="left:398px;top:419px;width:1px;height:19px;background:#d8d8d8;"></div>
<div style="left:467px;top:419px;width:1px;height:19px;background:#d8d8d8;"></div>
<div style="left:519px;top:419px;width:1px;height:19px;background:#d8d8d8;"></div>
<div style="left:586px;top:419px;width:1px;height:19px;background:#d8d8d8;"></div>
<div style="left:659px;top:419px;width:1px;height:19px;background:#d8d8d8;"></div>
<div style="left:735px;top:419px;width:1px;height:19px;background:#d8d8d8;"></div>
<div style="left:812px;top:419px;width:1px;height:19px;background:#d8d8d8;"></div>
<div style="left:908px;top:419px;width:1px;height:19px;background:#d8d8d8;"></div>
<div style="left:953px;top:419px;width:1px;height:19px;background:#d8d8d8;"></div>
<svg class="one" style="left:17.50px;top:421px" width="8" height="16"><path d="M5.22 13.00 L3.99 13.00 L3.99 5.16 L3.69 5.43 L3.21 5.77 L2.67 6.10 L2.05 6.42 L1.52 6.64 L1.52 5.44 L2.26 5.07 L2.94 4.59 L3.55 4.04 L4.03 3.50 L4.38 2.98 L5.22 2.98Z" fill="#2f6f47"/></svg>
<span class="t" style="left:17.5px;top:421px;color:#2f6f47;letter-spacing:0.214px;"> </span>
<span class="t" style="left:137px;top:419px;color:#000;letter-spacing:0.448px;">T</span>
<div style="left:520px;top:419px;width:67px;height:20px;background:#ffffff;box-sizing:border-box;border:2px solid #137813;border-radius:3px;"></div>
<span class="t" style="left:573.0px;top:421px;color:#000;letter-spacing:0.214px;">6</span>
<div style="left:660px;top:419px;width:76px;height:20px;background:#ffffff;box-sizing:border-box;border:2px solid #137813;border-radius:3px;"></div>
<span class="t" style="left:702.0px;top:421px;color:#000;letter-spacing:0.188px;">0,90</span>
<div style="left:736px;top:419px;width:77px;height:20px;background:#ffffff;box-sizing:border-box;border:2px solid #137813;border-radius:3px;"></div>
<span class="t" style="left:771.0px;top:421px;color:#000;letter-spacing:0.193px;">36,00</span>
<div style="left:813px;top:418px;width:96px;height:21px;background:#9acd32;box-sizing:border-box;border:2px solid #0a12a6;"></div>
<span class="t" style="left:875.0px;top:421px;color:#000;letter-spacing:0.188px;">2,78</span>
</body></html>
